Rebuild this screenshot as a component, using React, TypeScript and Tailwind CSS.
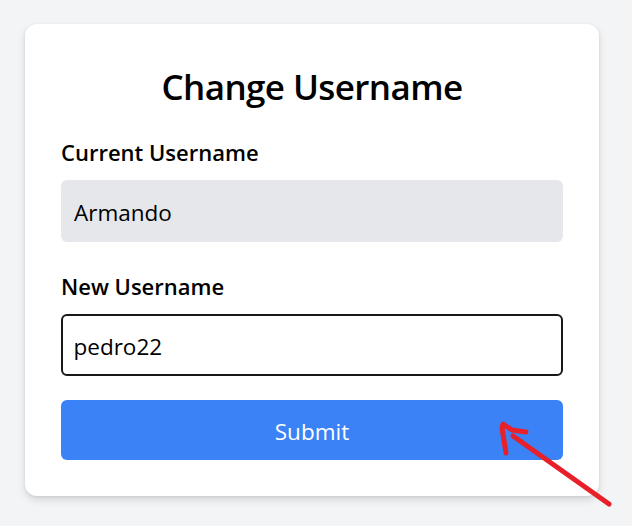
import { useState } from "react";

export default function App() {
  const [newName, setNewName] = useState("pedro22");

  return (
    <div
      className="relative min-h-screen w-full bg-[#f3f4f6] px-[25px] pt-[24px]"
      style={{ fontFamily: '"Open Sans", "Noto Sans", sans-serif' }}
    >
      <div className="flex h-[472px] w-[574px] flex-col rounded-[12px] bg-white px-[36px] pt-[40px] shadow-[0_4px_8px_rgba(0,0,0,0.12),0_1px_3px_rgba(0,0,0,0.08)]">
        <h2 className="text-center text-[35px] font-semibold leading-[45px] tracking-[-0.6px] text-black">
          Change Username
        </h2>

        {/* current */}
        <label className="mt-[28px] text-[22px] font-semibold leading-[30px] text-black">
          Current Username
        </label>
        <div className="mt-[13px] flex h-[62px] items-center rounded-[6px] bg-[#e5e7eb] px-[13px] pt-[3px] text-[22.5px] text-black">
          Armando
        </div>

        {/* new */}
        <label className="mt-[29px] text-[22px] font-semibold leading-[30px] text-black">
          New Username
        </label>
        <input
          autoFocus
          value={newName}
          onChange={(e) => setNewName(e.target.value)}
          className="mt-[13px] h-[62px] rounded-[6px] border-[2.5px] border-[#18181b] bg-white px-[10.5px] pt-[3px] text-[22.5px] text-black caret-black outline-none"
        />

        <button className="mt-[24px] h-[60px] rounded-[6px] bg-[#3b82f6] pt-[3px] text-[22.5px] text-white">
          Submit
        </button>
      </div>

      {/* red arrow annotation */}
      <svg
        className="pointer-events-none absolute left-0 top-0"
        width="632"
        height="526"
        viewBox="0 0 632 526"
      >
        <g
          stroke="#e8202a"
          strokeWidth="5"
          strokeLinecap="round"
          strokeLinejoin="round"
          fill="none"
        >
          <path d="M609 504 L513 436" />
          <path d="M506 453 L502 428 L503 424 L512 430 L526 432" />
        </g>
      </svg>
    </div>
  );
}
